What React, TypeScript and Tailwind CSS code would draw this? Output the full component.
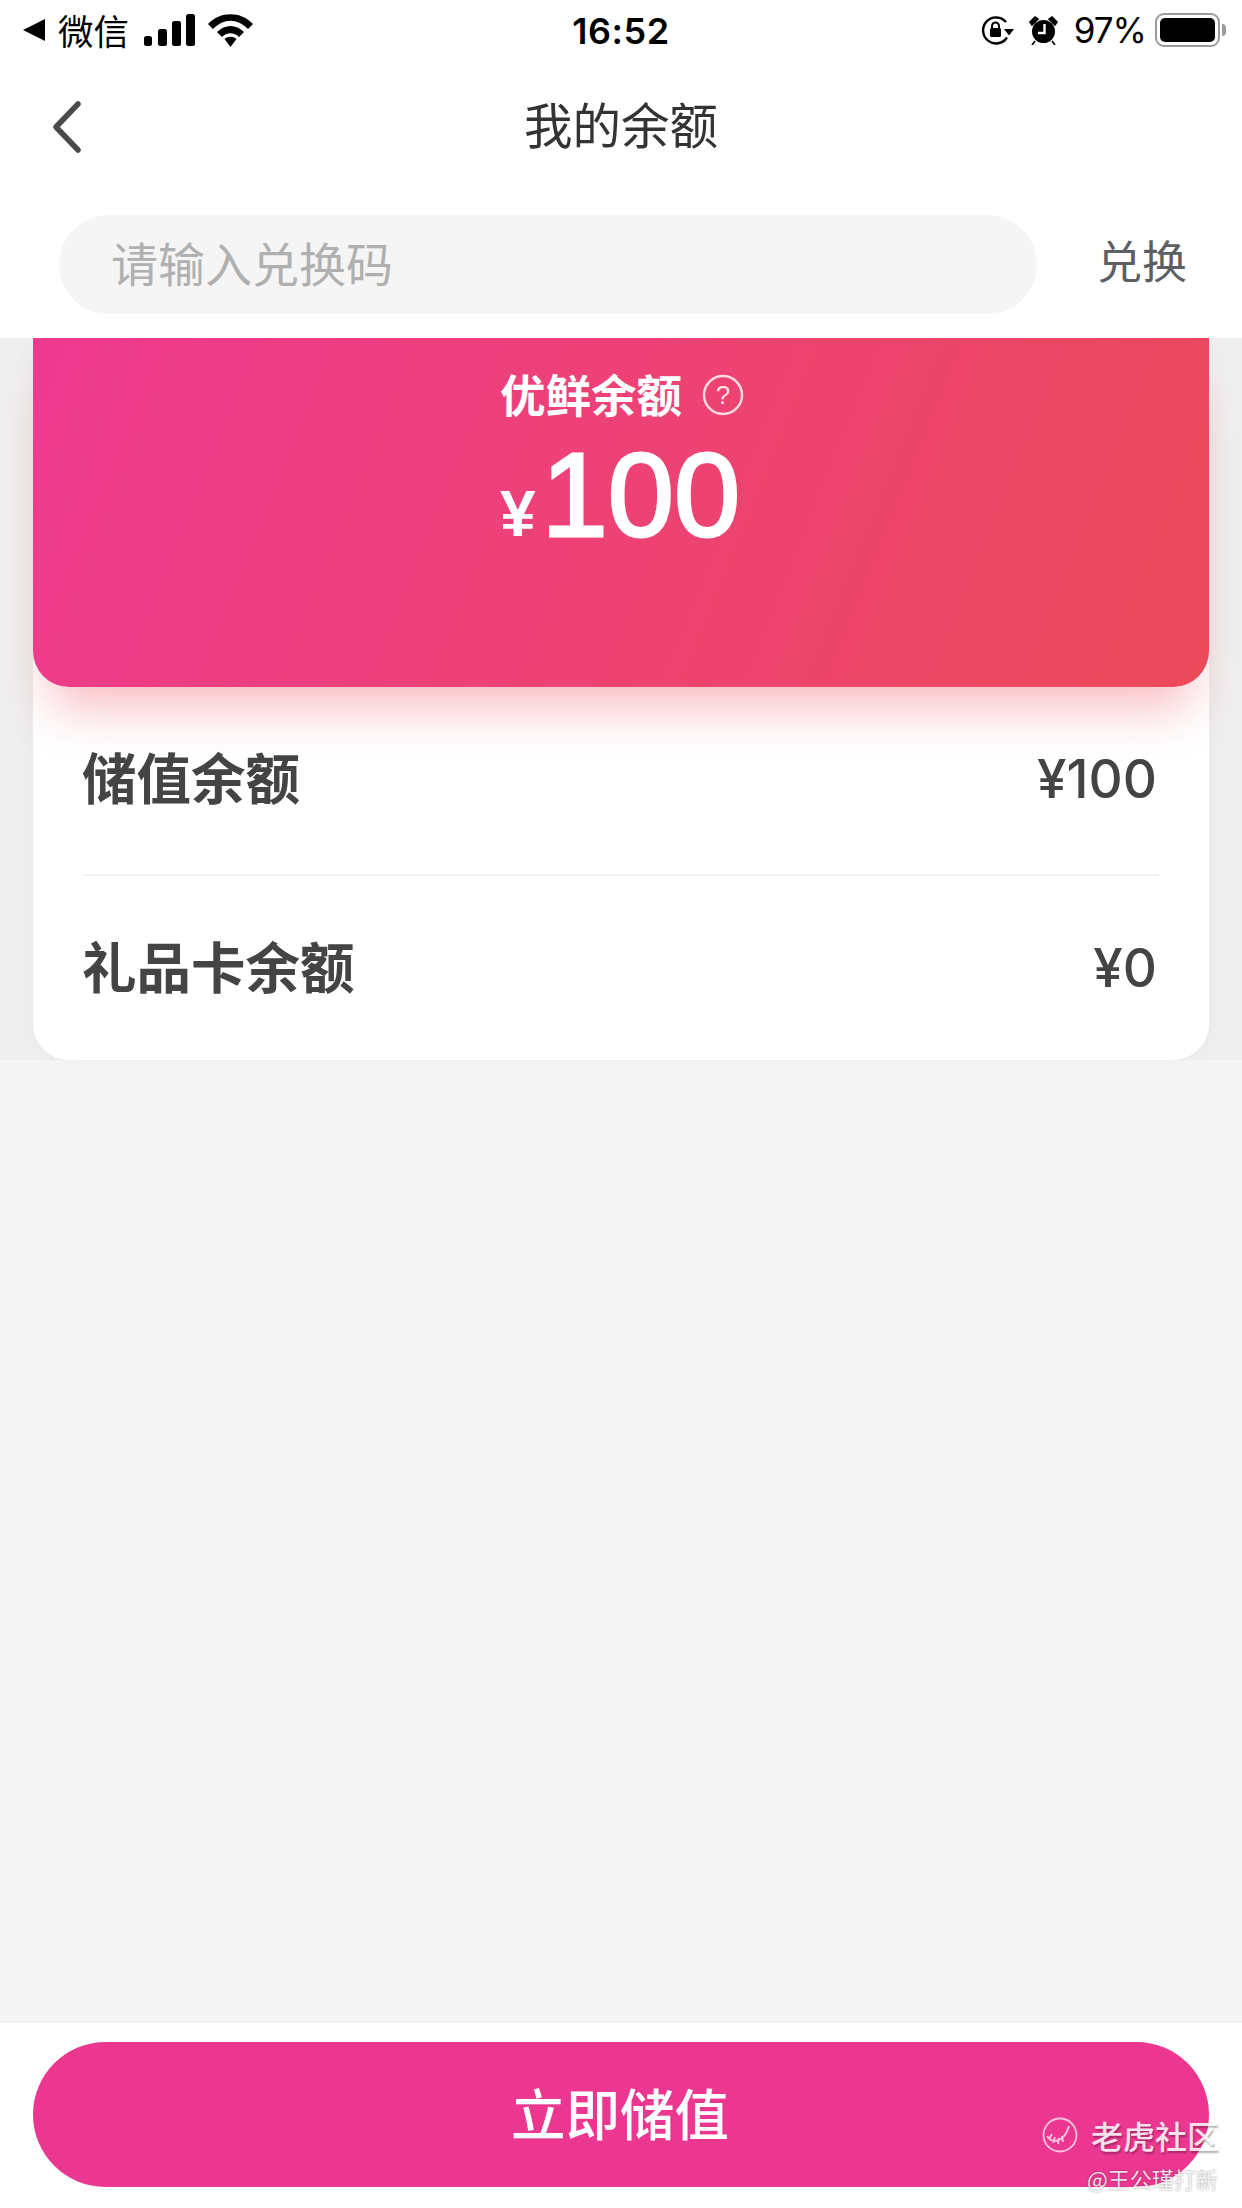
export default function App() {
  return (
    <div className="relative flex h-[2208px] w-[1242px] flex-col overflow-hidden bg-[#f5f5f5] font-['Noto_Sans_CJK_SC',sans-serif]">
      <header className="relative z-10 h-[338px] bg-white">
        <div className="relative flex h-[60px] items-center justify-between pl-[23px] pr-[16px] text-black">
          <div className="flex items-center">
            <svg width="22" height="22" viewBox="0 0 22 22" className="mr-[13px]"><path d="M0 11 L22 0 V22 Z" fill="#000" /></svg>
            <span className="text-[35.500px] leading-none">微信</span>
            <svg width="51" height="32" viewBox="0 0 51 32" className="ml-[15px]">
              <rect x="0" y="22" width="8" height="10" rx="2.500" /><rect x="14" y="15" width="9" height="17" rx="2.500" /><rect x="28" y="7" width="9" height="25" rx="2.500" /><rect x="42" y="0" width="9" height="32" rx="2.500" />
            </svg>
            <svg width="45" height="33" viewBox="0 0 45 33" className="ml-[13px]">
              <path d="M0 10 C12 -3 33 -3 45 10 L40 15 C29 4 16 4 5 15Z" /><path d="M9 18 C17 10 28 10 36 18 L31 23 C26 18 19 18 14 23Z" /><path d="M16.500 25 C20 22 25 22 28.500 25 L22.500 33Z" />
            </svg>
          </div>
          <span className="absolute left-0 right-0 top-[10px] text-center font-['Inter',sans-serif] text-[36px] font-semibold leading-[42px] tracking-[0.5px]">16:52</span>
          <div className="flex items-center">
            <svg width="33" height="29" viewBox="0 0 33 29" className="mr-[15px]">
              <path d="M26 21.500 A13 13 0 1 1 25 6" fill="none" stroke="#000" strokeWidth="2.400" /><path d="M23 13 H33 L28 19.500Z" />
              <rect x="9" y="12" width="11" height="9" rx="1.500" /><path d="M11 12 V10 A3.500 3.500 0 0 1 18 10 V12" fill="none" stroke="#000" strokeWidth="2" />
            </svg>
            <svg width="29" height="29" viewBox="0 0 29 29" className="mr-[16px]">
              <circle cx="14.500" cy="15.500" r="11.500" /><path d="M1 6 L6 1 L9 3 L3 9Z M28 6 L23 1 L20 3 L26 9Z M6 25 L3 29 M23 25 L26 29" stroke="#000" strokeWidth="1.600" />
              <path d="M15.500 8 V17 H9" fill="none" stroke="#fff" strokeWidth="2.400" />
            </svg>
            <span className="mr-[9px] font-['Inter',sans-serif] text-[35px] font-normal leading-none tracking-[-1px]">97%</span>
            <div className="flex items-center">
              <div className="flex h-[34px] w-[65px] items-center rounded-[9px] border-[2px] border-[#9b9b9b] p-[3px]"><div className="h-full w-full rounded-[5px] bg-black" /></div>
              <div className="ml-[2px] h-[12px] w-[4px] rounded-r-[4px] bg-[#9b9b9b]" />
            </div>
          </div>
        </div>
        <div className="relative flex h-[130px] items-center justify-center">
          <svg width="30" height="52" viewBox="0 0 30 52" className="absolute left-[52px] top-[41px]">
            <path d="M26 3 L4 26 L26 49" fill="none" stroke="#4a4a4a" strokeWidth="5.500" strokeLinecap="round" strokeLinejoin="round" />
          </svg>
          <h1 className="mb-[4px] text-[48.500px] font-normal leading-none text-[#333333]">我的余额</h1>
        </div>
        <div className="flex items-start pl-[59px] pt-[25px]">
          <div className="flex h-[99px] w-[978px] items-center rounded-full bg-[#f5f5f5] pb-[6px] pl-[52px] text-[47px] leading-none text-[#b0b0b0]">请输入兑换码</div>
          <span className="ml-[60px] mt-[22px] text-[45px] leading-none text-[#5c5f63]">兑换</span>
        </div>
      </header>

      <main className="h-[722px] bg-[#efefef] px-[33px]">
        <section className="relative h-full rounded-b-[36px] bg-white shadow-[0_0_24px_rgba(0,0,0,0.03)]">
          <div className="flex h-[349px] flex-col items-center rounded-b-[36px] bg-[linear-gradient(112deg,#ee3a8f,#ec4a5a)] text-white shadow-[0_38px_50px_-18px_rgba(236,74,90,0.38)]">
            <div className="mt-[33px] flex items-center pl-[2px]">
              <span className="text-[45.500px] font-bold leading-none">优鲜余额</span>
              <svg width="42" height="42" viewBox="0 0 42 42" className="ml-[20px] mt-[2px]">
                <circle cx="21" cy="21" r="19" fill="none" stroke="#fff" strokeOpacity="0.8" strokeWidth="2.500" />
                <text x="21" y="30" textAnchor="middle" fill="#fff" fillOpacity="0.85" fontSize="26" fontFamily="Liberation Sans">?</text>
              </svg>
            </div>
            <div className="mt-[18px] flex items-baseline pr-[2px] font-['Liberation_Sans',sans-serif] leading-none">
              <span className="mr-[6px] text-[64px] font-bold">¥</span>
              <span className="text-[119px] font-normal [-webkit-text-stroke:3px_white]">100</span>
            </div>
          </div>
          <div className="flex h-[187px] items-center justify-between pb-[9px] pl-[49px] pr-[52px] text-[#444444]">
            <span className="text-[54.500px] font-bold leading-[64px]">储值余额</span>
            <span className="pt-[6px] font-['Inter',sans-serif] text-[53px] font-medium leading-[64px]">¥100</span>
          </div>
          <div className="mx-[50px] h-[2px] bg-[#f1f1f1]" />
          <div className="flex h-[184px] items-center justify-between pb-[6px] pl-[49px] pr-[52px] text-[#444444]">
            <span className="text-[54.500px] font-bold leading-[64px]">礼品卡余额</span>
            <span className="pt-[6px] font-['Inter',sans-serif] text-[53px] font-medium leading-[64px]">¥0</span>
          </div>
        </section>
      </main>

      <div className="flex-1" />

      <footer className="h-[185px] bg-white px-[33px] pt-[19px]">
        <button className="h-[145px] w-full rounded-full bg-[#ec3791] pb-[6px] pr-[2px] text-[54.500px] font-medium text-white">立即储值</button>
      </footer>

      <div className="absolute left-[1042px] top-[2117px] flex items-center text-white">
        <svg width="36" height="36" viewBox="0 0 36 36" className="opacity-70">
          <circle cx="18" cy="18" r="16.500" fill="none" stroke="#fff" strokeWidth="1.800" />
          <path d="M5 19 C10 27 22 26 27 9 M7 22 L10 17 M11 26 L13 20 M16 27 L17 21 M21 25 L20 19" fill="none" stroke="#fff" strokeWidth="2" />
        </svg>
        <span className="ml-[13px] text-[32px] font-medium leading-none text-white/85 [text-shadow:1px_2px_2px_rgba(0,0,0,0.3)]">老虎社区</span>
      </div>
      <span className="absolute left-[1087px] top-[2167px] text-[22px] leading-none text-white/85 [text-shadow:0_0_2px_rgba(0,0,0,0.45)]">@王公瑾打新</span>
    </div>
  );
}
